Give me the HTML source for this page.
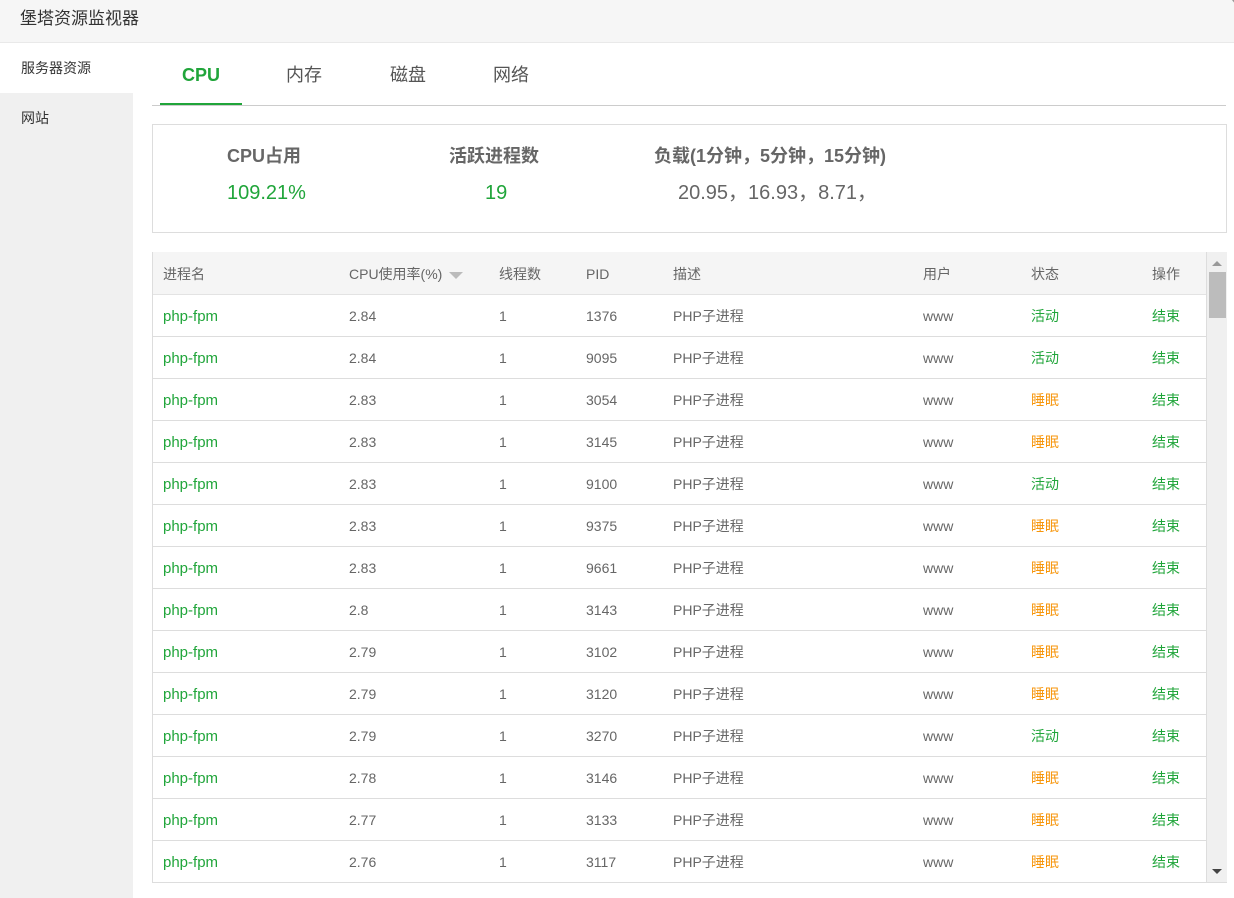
<!DOCTYPE html>
<html><head><meta charset="utf-8"><style>
*{margin:0;padding:0;box-sizing:border-box}
body{width:1234px;height:898px;overflow:hidden;background:#fff;font-family:"Liberation Sans","Noto Sans CJK SC",sans-serif;color:#666;position:relative}
.title{position:absolute;left:0;top:0;width:1234px;height:43px;background:#f6f6f6;border-bottom:1px solid #e9e9e9;font-size:17px;color:#333;line-height:38px;padding-left:20px}
.close{position:absolute;left:1230px;top:-20px;width:26px;height:26px;border-radius:50%;background:#999}
.side{position:absolute;left:0;top:43px;width:133px;height:855px;background:#f0f0f0}
.side div{height:50px;line-height:50px;padding-left:21px;font-size:14px;color:#333}
.side .on{background:#fff}
.tabs{position:absolute;left:152px;top:43px;width:1074px;height:63px;border-bottom:1px solid #ccc}
.tab{position:absolute;top:0;height:62px;line-height:64px;font-size:18px;color:#555;text-align:center}
.tab.on{color:#20a53a;font-weight:bold;border-bottom:2px solid #20a53a}
.stat{position:absolute;left:152px;top:124px;width:1075px;height:109px;border:1px solid #ddd}
.st{position:absolute;font-size:18px;font-weight:bold;color:#666;top:19px;line-height:24px}
.sv{position:absolute;font-size:20px;color:#20a53a;top:55px;line-height:26px}
.tbl{position:absolute;left:152px;top:252px;width:1054px;height:631px;border:1px solid #ddd;border-top:none;border-right:none;overflow:hidden}
.row{position:relative;height:42px;border-bottom:1px solid #ddd;font-size:14px;color:#666}
.row.h{background:#f5f5f5;border-bottom:1px solid #e3e3e3;height:43px}
.row span{position:absolute;top:12px;line-height:18px}
.g{color:#20a53a}.o{color:#f7960c}
.sb{position:absolute;left:1206px;top:252px;width:21px;height:631px;background:#f0f0f0;border-left:1px solid #ddd;border-bottom:1px solid #ddd}
.thumb{position:absolute;left:2px;top:20px;width:17px;height:46px;background:#bcbcbc}
.au{position:absolute;left:5px;top:9px;border-left:5px solid transparent;border-right:5px solid transparent;border-bottom:5px solid #999}
.ad{position:absolute;left:5px;bottom:8px;border-left:5px solid transparent;border-right:5px solid transparent;border-top:5px solid #444}
</style></head><body>
<div class="title">堡塔资源监视器</div>
<div class="close"></div>
<div class="side"><div class="on">服务器资源</div><div>网站</div></div>
<div class="tabs">
<div class="tab on" style="left:8px;width:82px">CPU</div>
<div class="tab" style="left:120px;width:64px">内存</div>
<div class="tab" style="left:224px;width:64px">磁盘</div>
<div class="tab" style="left:327px;width:64px">网络</div>
</div>
<div class="stat">
<div class="st" style="left:74px">CPU占用</div>
<div class="sv" style="left:74px">109.21%</div>
<div class="st" style="left:296px">活跃进程数</div>
<div class="sv" style="left:332px">19</div>
<div class="st" style="left:501px">负载(1分钟，5分钟，15分钟)</div>
<div class="sv" style="left:525px;color:#666">20.95，16.93，8.71，</div>
</div>
<div class="tbl">
<div class="row h"><span style="left:10px;top:13px">进程名</span><span style="left:196px;top:13px">CPU使用率(%) <i style="display:inline-block;border-left:7px solid transparent;border-right:7px solid transparent;border-top:7px solid #bbb;vertical-align:middle;margin-left:3px"></i></span><span style="left:346px;top:13px">线程数</span><span style="left:433px;top:13px">PID</span><span style="left:520px;top:13px">描述</span><span style="left:770px;top:13px">用户</span><span style="left:878px;top:13px">状态</span><span style="left:999px;top:13px">操作</span></div>
<div id="rows"></div>
</div>
<div class="sb"><div class="au"></div><div class="thumb"></div><div class="ad"></div></div>
<script>
var d=[["2.84","1376",1],["2.84","9095",1],["2.83","3054",0],["2.83","3145",0],["2.83","9100",1],["2.83","9375",0],["2.83","9661",0],["2.8","3143",0],["2.79","3102",0],["2.79","3120",0],["2.79","3270",1],["2.78","3146",0],["2.77","3133",0],["2.76","3117",0],["2.75","3100",0]];
var h="";d.forEach(function(r){h+='<div class="row"><span class="g" style="left:10px;font-size:15px;top:13px">php-fpm</span><span style="left:196px">'+r[0]+'</span><span style="left:346px">1</span><span style="left:433px">'+r[1]+'</span><span style="left:520px">PHP子进程</span><span style="left:770px">www</span><span class="'+(r[2]?'g':'o')+'" style="left:878px">'+(r[2]?'活动':'睡眠')+'</span><span class="g" style="left:999px">结束</span></div>'});
document.getElementById("rows").innerHTML=h;
</script>
</body></html>
